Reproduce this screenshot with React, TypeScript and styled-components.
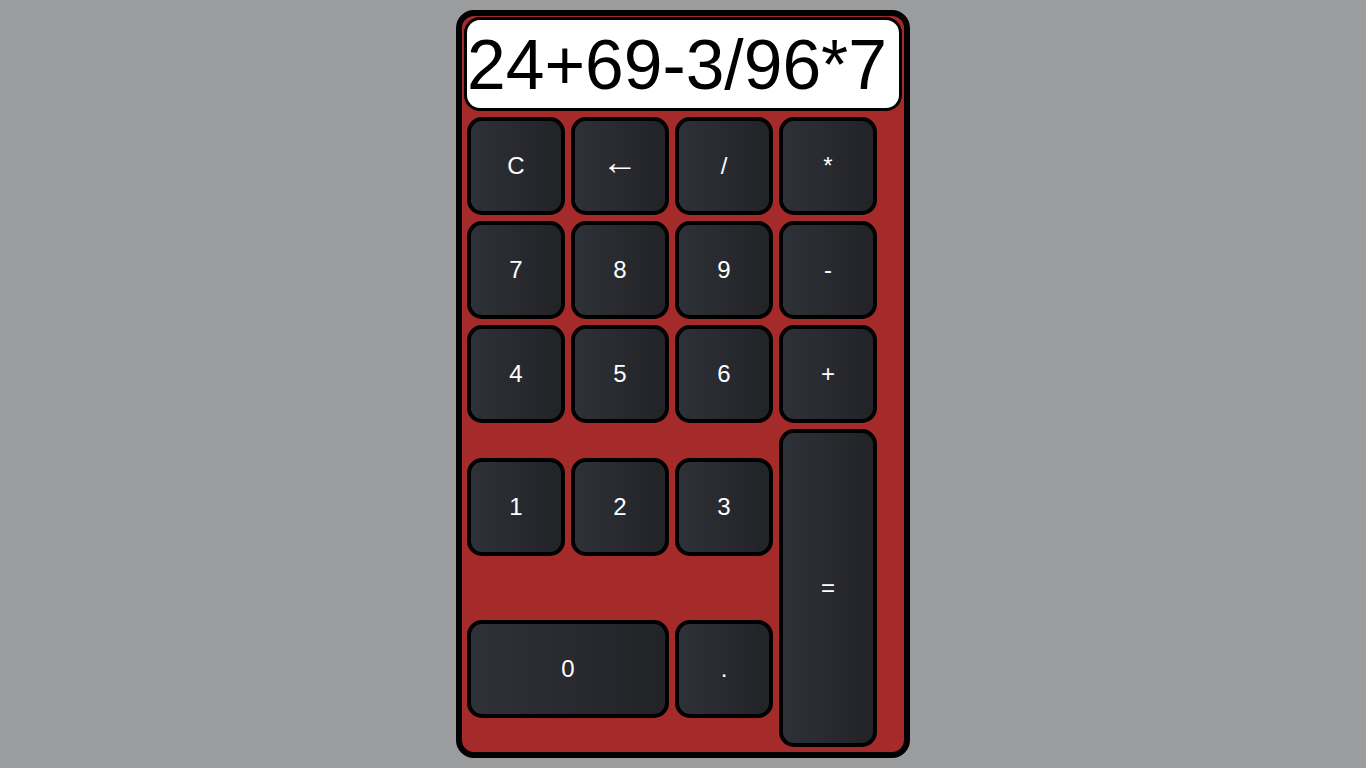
import React from "react";
import styled, { createGlobalStyle } from "styled-components";

const Global = createGlobalStyle`
  html, body { margin: 0; padding: 0; }
  body {
    background: #9b9c9e;
    font-family: "Liberation Sans", Arial, sans-serif;
  }
  * { box-sizing: border-box; }
`;

const Page = styled.div`
  height: 100vh;
  display: flex;
  align-items: center;
  justify-content: center;
`;

const Calculator = styled.div`
  width: 454px;
  height: 748px;
  background: #a52a2a;
  border: 6px solid #000;
  border-radius: 18px;
  padding: 1px 2px;
  display: flex;
  flex-direction: column;
  gap: 3px;
`;

const Display = styled.div`
  height: 94px;
  background: #fff;
  border: 3px solid #000;
  border-radius: 16px;
  padding: 6px 0 4px 0;
  font-size: 69.6px;
  line-height: 78px;
  color: #000;
  white-space: nowrap;
  overflow: hidden;
`;

const Keys = styled.div`
  display: grid;
  grid-template-columns: repeat(4, 104px);
  grid-template-rows: 104px 104px 104px 162px 162px;
  align-items: center;
`;

const Key = styled.button<{ $wide?: boolean; $tall?: boolean }>`
  margin: 3px;
  height: ${(p) => (p.$tall ? "318px" : "98px")};
  grid-column: ${(p) => (p.$wide ? "span 2" : "auto")};
  grid-row: ${(p) => (p.$tall ? "span 2" : "auto")};
  border: 4px solid #000;
  border-radius: 15px;
  background: linear-gradient(to right, #2e3137, #222327);
  color: #fff;
  font-family: "Liberation Sans", Arial, sans-serif;
  font-size: 24px;
  display: flex;
  align-items: center;
  justify-content: center;
  padding: 0;
  cursor: pointer;
`;

const Arrow = styled.span`
  font-size: 36px;
  line-height: 1;
  margin-top: -8px;
`;

export default function App() {
  return (
    <>
      <Global />
      <Page>
        <Calculator>
          <Display>24+69-3/96*7</Display>
          <Keys>
            <Key>C</Key>
            <Key>
              <Arrow>←</Arrow>
            </Key>
            <Key>/</Key>
            <Key>*</Key>
            <Key>7</Key>
            <Key>8</Key>
            <Key>9</Key>
            <Key>-</Key>
            <Key>4</Key>
            <Key>5</Key>
            <Key>6</Key>
            <Key>+</Key>
            <Key>1</Key>
            <Key>2</Key>
            <Key>3</Key>
            <Key $tall>=</Key>
            <Key $wide>0</Key>
            <Key>.</Key>
          </Keys>
        </Calculator>
      </Page>
    </>
  );
}
